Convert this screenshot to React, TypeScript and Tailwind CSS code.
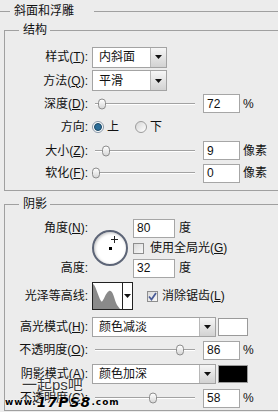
import React from 'react';

const Key = ({ k }: { k: string }) => (
  <>
    (<span className="underline underline-offset-[1px]">{k}</span>)
  </>
);

const Arrow = () => (
  <svg width="7" height="4" viewBox="0 0 7 4">
    <polygon points="0,0 7,0 3.5,4" fill="#111" />
  </svg>
);

const Select = ({ value, w, h = 21 }: { value: string; w: string; h?: number }) => (
  <div className={`flex ${w} ${h === 21 ? 'h-[21px]' : 'h-[20px]'} border border-[#a3a3a3] bg-white`}>
    <div className="flex-1 pl-[6px] flex items-center">{value}</div>
    <div className="w-[16px] border-l border-[#b8b8b8] bg-linear-to-b from-[#f6f6f6] to-[#d2d2d2] flex items-center justify-center">
      <Arrow />
    </div>
  </div>
);

const Slider = ({ at }: { at: number }) => (
  <div className="relative w-[111px] h-full flex items-center">
    <div className="ml-[3px] w-[100px] h-[2px] border-t border-[#a2a2a2] border-b border-b-white" />
    <div
      className="absolute top-1/2 -translate-y-1/2 w-[8px] h-[11px] rounded-[4px] border border-[#8c8c8c] bg-linear-to-b from-white to-[#d6d6d6]"
      style={{ left: at }}
    />
  </div>
);

const Field = ({ value, w = 'w-[37px]' }: { value: string; w?: string }) => (
  <div className={`${w} h-[19px] border border-[#a6a6a6] bg-white pl-[3px] flex items-center text-[12px]`}>{value}</div>
);

const Label = ({ children }: { children: React.ReactNode }) => (
  <div className="w-[83px] shrink-0 text-right mr-[4px]">{children}</div>
);

const Radio = ({ on }: { on?: boolean }) =>
  on ? (
    <span className="w-[12px] h-[12px] shrink-0 rounded-full border border-[#8796a6] bg-white flex items-center justify-center">
      <span className="w-[8px] h-[8px] rounded-full bg-[#2b6d98] border border-[#1a4764]" />
    </span>
  ) : (
    <span className="block w-[12px] h-[12px] shrink-0 rounded-full border border-[#9c9c9c] bg-linear-to-br from-[#d6d6d6] to-white" />
  );

const Check = ({ on }: { on?: boolean }) => (
  <span className="w-[11px] h-[11px] border border-[#8e8e8e] bg-linear-to-br from-[#dadada] to-[#f9f9f9] flex items-center justify-center shrink-0">
    {on && (
      <svg width="9" height="9" viewBox="0 0 9 9">
        <path d="M1 4.5 L3.5 7.5 L8 1" stroke="#4a5c98" strokeWidth="1.8" fill="none" />
      </svg>
    )}
  </span>
);

export default function App() {
  return (
    <div className="relative w-[278px] h-[412px] overflow-hidden bg-[#ececec] text-[12px] text-[#111] font-['Liberation_Sans','Noto_Sans_CJK_SC',sans-serif] leading-[14px]">
      {/* title */}
      <div className="flex items-center h-[22px]">
        <div className="w-[10px] h-px bg-[#a0a0a0]" />
        <span className="ml-[4px] mr-[20px]">斜面和浮雕</span>
        <div className="flex-1 h-px bg-[#a0a0a0]" />
      </div>

      {/* 结构 */}
      <fieldset className="ml-[4px] mt-[1px] w-[300px] border border-r-0 border-[#a0a0a0] pt-[8px] pb-[6px]">
        <legend className="ml-[14px] pl-[4px] pr-[3px] leading-[14px]">结构</legend>
        <div className="flex items-center h-[24px]">
          <Label>样式<Key k="T" />:</Label>
          <Select value="内斜面" w="w-[75px]" />
        </div>
        <div className="flex items-center h-[23px]">
          <Label>方法<Key k="Q" />:</Label>
          <Select value="平滑" w="w-[75px]" />
        </div>
        <div className="flex items-center h-[23px]">
          <Label>深度<Key k="D" />:</Label>
          <Slider at={6} />
          <Field value="72" />
          <span className="ml-[3px]">%</span>
        </div>
        <div className="flex items-center h-[24px]">
          <Label>方向:</Label>
          <Radio on />
          <span className="ml-[3px]">上</span>
          <span className="ml-[16px] flex"><Radio /></span>
          <span className="ml-[3px]">下</span>
        </div>
        <div className="flex items-center h-[23px]">
          <Label>大小<Key k="Z" />:</Label>
          <Slider at={10} />
          <Field value="9" />
          <span className="ml-[3px]">像素</span>
        </div>
        <div className="flex items-center h-[22px]">
          <Label>软化<Key k="F" />:</Label>
          <Slider at={0} />
          <Field value="0" />
          <span className="ml-[3px]">像素</span>
        </div>
      </fieldset>

      {/* 阴影 */}
      <fieldset className="ml-[4px] mt-[6px] w-[300px] border border-r-0 border-[#a0a0a0] pt-[7px]">
        <legend className="ml-[14px] pl-[4px] pr-[3px] leading-[14px]">阴影</legend>
        <div className="flex h-[60px]">
          <div className="w-[83px] mr-[4px] shrink-0 flex flex-col justify-between text-right">
            <div className="h-[20px] flex items-center justify-end">角度<Key k="N" />:</div>
            <div className="h-[20px] flex items-center justify-end">高度:</div>
          </div>
          <div className="flex items-center">
            <div className="relative w-[36px] h-[36px] rounded-full border-2 border-[#5d6577] bg-white shadow-[inset_1px_1px_3px_rgba(0,0,0,0.25)]">
              <svg className="absolute left-[17px] top-[4px]" width="7" height="7" viewBox="0 0 7 7">
                <path d="M3.5 0 V7 M0 3.5 H7" stroke="#222" strokeWidth="1" />
              </svg>
              <div className="absolute left-[15px] top-[15px] w-[3px] h-[3px] bg-black" />
            </div>
          </div>
          <div className="ml-[5px] flex flex-col">
            <div className="h-[20px] flex items-center">
              <Field value="80" w="w-[42px]" />
              <span className="ml-[4px]">度</span>
            </div>
            <div className="h-[20px] flex items-center">
              <Check />
              <span className="ml-[6px]">使用全局光<Key k="G" /></span>
            </div>
            <div className="h-[20px] flex items-center">
              <Field value="32" w="w-[42px]" />
              <span className="ml-[4px]">度</span>
            </div>
          </div>
        </div>

        <div className="flex items-center h-[28px] mt-[4px]">
          <Label>光泽等高线:</Label>
          <div className="flex w-[41px] h-[28px] border border-[#222] bg-white">
            <svg width="29" height="26" viewBox="0 0 29 26" className="shrink-0">
              <path d="M0 26 L0 1 C3 3 5 13 8 18 C10 21 12 10 16 8 C20 6 21 16 24 22 L27 26 Z" fill="#8a8a8a" />
            </svg>
            <div className="flex-1 border-l border-[#222] flex items-center justify-center">
              <Arrow />
            </div>
          </div>
          <span className="ml-[14px]"><Check on /></span>
          <span className="ml-[4px]">消除锯齿<Key k="L" /></span>
        </div>

        <div className="flex items-center h-[22px] mt-[6px]">
          <Label>高光模式<Key k="H" />:</Label>
          <Select value="颜色减淡" w="w-[124px]" h={20} />
          <div className="ml-[2px] w-[30px] h-[18px] border border-[#9a9a9a] bg-white" />
        </div>
        <div className="flex items-center h-[24px]">
          <Label>不透明度<Key k="O" />:</Label>
          <Slider at={84} />
          <Field value="86" />
          <span className="ml-[3px]">%</span>
        </div>
        <div className="flex items-center h-[24px]">
          <Label>阴影模式<Key k="A" />:</Label>
          <Select value="颜色加深" w="w-[124px]" h={20} />
          <div className="ml-[2px] w-[30px] h-[18px] border border-[#9a9a9a] bg-black" />
        </div>
        <div className="flex items-center h-[24px]">
          <Label>不透明度<Key k="C" />:</Label>
          <Slider at={57} />
          <Field value="58" />
          <span className="ml-[3px]">%</span>
        </div>
      </fieldset>

      {/* watermark */}
      <div className="absolute left-[22px] top-[377px] text-[15px] leading-[16px] text-[#3a3a3a] [text-shadow:0_0_2px_#fff,0_0_2px_#fff]">
        一起ps吧
      </div>
      <div className="absolute left-[5px] top-[396px] flex items-end font-['DejaVu_Sans',sans-serif] font-bold text-black leading-[12px] [text-shadow:0_0_2px_#fff,0_0_1px_#fff]">
        <span className="text-[9px] tracking-[1px]">www.</span>
        <span className="text-[14px] tracking-[1px] italic">17PS8</span>
        <span className="text-[9px] tracking-[1px]">.com</span>
      </div>
    </div>
  );
}
